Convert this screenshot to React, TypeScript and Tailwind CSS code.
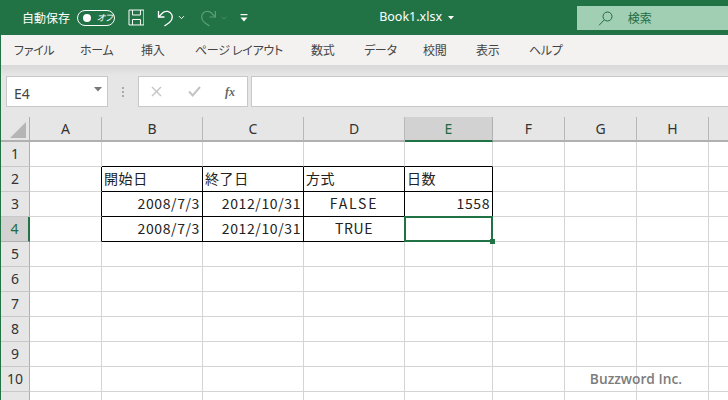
import React from 'react';
import { ChevronDown } from 'lucide-react';

const jp = "font-['Noto_Sans_CJK_JP','Noto_Sans',sans-serif] [font-feature-settings:'palt']";

const tabs = [
  { label: 'ファイル', w: 'w-[66px]' },
  { label: 'ホーム', w: 'w-[61px]' },
  { label: '挿入', w: 'w-[54px]' },
  { label: 'ページ レイアウト', w: 'w-[116px]' },
  { label: '数式', w: 'w-[53px]' },
  { label: 'データ', w: 'w-[59px]' },
  { label: '校閲', w: 'w-[53px]' },
  { label: '表示', w: 'w-[53px]' },
  { label: 'ヘルプ', w: 'w-[40px]' },
];

const columns = ['A', 'B', 'C', 'D', 'E', 'F', 'G', 'H', ''];

const rows = [1, 2, 3, 4, 5, 6, 7, 8, 9, 10, 11];

type CellData = { text: string; align: 'left' | 'right' | 'center'; wide?: boolean };

const cells: Record<string, CellData> = {
  B2: { text: '開始日', align: 'left' },
  C2: { text: '終了日', align: 'left' },
  D2: { text: '方式', align: 'left' },
  E2: { text: '日数', align: 'left' },
  B3: { text: '2008/7/3', align: 'right' },
  C3: { text: '2012/10/31', align: 'right' },
  D3: { text: 'FALSE', align: 'center', wide: true },
  E3: { text: '1558', align: 'right' },
  B4: { text: '2008/7/3', align: 'right' },
  C4: { text: '2012/10/31', align: 'right' },
  D4: { text: 'TRUE', align: 'center' },
  E4: { text: '', align: 'left' },
};

const Cell: React.FC<{ col: string; row: number }> = ({ col, row }) => {
  const data = cells[col + row];
  const isHead = col !== '' && 'BCDE'.includes(col);
  const inTable = isHead && row >= 2 && row <= 4;
  const rightBlack = inTable || (col === 'A' && row >= 2 && row <= 4);
  const bottomBlack = inTable || (isHead && row === 1);
  const selected = col === 'E' && row === 4;
  return (
    <div
      className={`relative flex items-center border-r border-b px-[2px] pb-[2px] text-[14px] text-[#222] ${jp} ${
        data?.wide ? 'tracking-[1.8px]' : 'tracking-[0.6px]'
      } ${rightBlack ? 'border-r-black' : 'border-r-[#d4d4d4]'} ${bottomBlack ? 'border-b-black' : 'border-b-[#d4d4d4]'} ${
        data?.align === 'right' ? 'justify-end' : data?.align === 'center' ? 'justify-center' : 'justify-start'
      } ${selected ? 'z-10' : ''}`}
    >
      {data?.text}
      {selected && (
        <div className="absolute left-[-1px] top-[-1px] right-[-1px] bottom-[-1px] border-2 border-[#217346]">
          <div className="absolute right-[-4px] bottom-[-4px] h-[5px] w-[5px] bg-[#217346]" />
        </div>
      )}
    </div>
  );
};

export default function App() {
  return (
    <div className={`relative flex h-[400px] w-[728px] flex-col overflow-hidden bg-white ${jp}`}>
      {/* Title bar */}
      <div className="flex h-[35px] shrink-0 items-center bg-[#217346] text-white">
        <span className="ml-[22px] w-[55px] text-[12px]">自動保存</span>
        <div className="flex h-[16px] w-[38px] items-center rounded-full border border-white pl-[5px]">
          <div className="h-[8px] w-[8px] rounded-full bg-white" />
          <span className="ml-[6px] text-[9px] italic">オフ</span>
        </div>
        <svg className="ml-[13px]" width="17" height="17" viewBox="0 0 17 17" fill="none" stroke="white" strokeWidth="1">
          <path d="M1 1H16V16H1Z" />
          <path d="M4.5 1V6H12.5V1" />
          <path d="M4.5 16V10.5H12.5V16" />
        </svg>
        <svg className="ml-[13px]" width="17" height="18" viewBox="0 0 17 18" fill="none" stroke="white" strokeWidth="1.3">
          <path d="M1.5 2V8H7.5" />
          <path d="M1.5 8L6 3.5C9 1.5 13 2 14.8 5.5C16 8.5 14.8 11.5 12.5 13.5L7.5 17" />
        </svg>
        <ChevronDown className="ml-[3px]" size={9} strokeWidth={2.5} color="white" />
        <svg className="ml-[14px]" width="17" height="18" viewBox="0 0 17 18" fill="none" stroke="#5d9c7b" strokeWidth="1.2">
          <path d="M15.5 2V8H9.5" />
          <path d="M15.5 8L11 3.5C8 1.5 4 2 2.2 5.5C1 8.5 2.2 11.5 4.5 13.5L9.5 17" />
        </svg>
        <ChevronDown className="ml-[3px]" size={8} strokeWidth={2} color="#5d9c7b" />
        <svg className="ml-[12px]" width="8" height="8" viewBox="0 0 8 8" fill="white">
          <rect x="0.5" y="0" width="7" height="1.2" />
          <path d="M0.5 3.5H7.5L4 7.5Z" />
        </svg>
        <span className="ml-[131px] w-[68px] font-['Noto_Sans',sans-serif] text-[12.5px]">Book1.xlsx</span>
        <svg className="ml-[1px]" width="6" height="4" viewBox="0 0 6 4" fill="white">
          <path d="M0 0H6L3 3.5Z" />
        </svg>
        <div className="ml-[123px] mt-[1px] flex h-[24px] w-[152px] items-center bg-[#a0cfb4] text-[#1f6b43]">
          <svg className="ml-[21px]" width="15" height="15" viewBox="0 0 15 15" fill="none" stroke="#1f6b43" strokeWidth="1">
            <circle cx="9.5" cy="5.5" r="4.5" />
            <path d="M6.2 9L1 14.3" />
          </svg>
          <span className="ml-[15px] text-[12px]">検索</span>
        </div>
      </div>

      <div className="flex flex-1 flex-col border-l border-l-[#217346]">
        {/* Ribbon tabs */}
        <div className="flex h-[30px] shrink-0 items-center bg-[#f3f2f1] pl-[13px] text-[12px] tracking-[-0.3px] text-[#444]">
          {tabs.map(tab => (
            <span key={tab.label} className={`${tab.w} whitespace-nowrap`}>
              {tab.label}
            </span>
          ))}
        </div>

        {/* Formula bar */}
        <div className="flex h-[52px] shrink-0 flex-col bg-[#e6e6e6] bg-gradient-to-b from-[#d8d8d8] to-[#e6e6e6] to-[10px]">
          <div className="ml-[5px] mt-[11px] flex h-[31px] items-stretch">
            <div className="flex w-[102px] items-center justify-between border border-[#c8c8c8] bg-white pl-[7px] pr-[4px] pt-[3px] font-['Noto_Sans',sans-serif] text-[14px] text-[#444]">
              E4
              <svg className="mb-[7px] mr-[1px]" width="8" height="5" viewBox="0 0 8 5" fill="#777">
                <path d="M0 0H8L4 4.5Z" />
              </svg>
            </div>
            <div className="flex w-[30px] flex-col items-center justify-center gap-[2px]">
              <div className="h-[2px] w-[2px] bg-[#aaa]" />
              <div className="h-[2px] w-[2px] bg-[#aaa]" />
              <div className="h-[2px] w-[2px] bg-[#aaa]" />
            </div>
            <div className="flex w-[110px] items-center border border-[#c8c8c8] bg-white">
              <svg className="ml-[12px]" width="11" height="11" viewBox="0 0 11 11" stroke="#c4c4c4" strokeWidth="1.4">
                <path d="M1 1L10 10M10 1L1 10" />
              </svg>
              <svg className="ml-[26px]" width="13" height="11" viewBox="0 0 13 11" fill="none" stroke="#c4c4c4" strokeWidth="2">
                <path d="M1 5.5L4.7 9.5L12 1" />
              </svg>
              <span className="ml-[24px] font-['Liberation_Serif',serif] text-[12px] font-bold italic text-[#666]">fx</span>
            </div>
            <div className="ml-[3px] flex-1 border-y border-l border-[#c8c8c8] bg-white" />
          </div>
        </div>

        {/* Sheet */}
        <div className="relative flex-1">
          <div className="grid grid-cols-[29px_72px_101px_101px_101px_88px_72px_72px_72px_20px] grid-rows-[25px_repeat(11,25px)]">
            <div className="relative border-r border-b-2 border-[#b0b0b0] bg-[#e6e6e6]">
              <div className="absolute bottom-[2px] right-[3px] h-0 w-0 border-b-[16px] border-l-[16px] border-b-[#b5b5b5] border-l-transparent" />
            </div>
            {columns.map((name, i) => (
              <div
                key={i}
                className={`flex items-center justify-center border-r border-b-2 font-['Noto_Sans',sans-serif] text-[14px] ${
                  name === 'E'
                    ? 'border-r-[#b0b0b0] border-b-[#217346] bg-[#d2d2d2] text-[#1f6b43]'
                    : 'border-r-[#b8b8b8] border-b-[#b0b0b0] bg-[#e6e6e6] text-[#333]'
                }`}
              >
                {name}
              </div>
            ))}
            {rows.map(r => (
              <React.Fragment key={r}>
                <div
                  className={`flex items-center justify-center border-b pb-[2px] font-['Noto_Sans',sans-serif] text-[14px] ${
                    r === 4
                      ? 'border-r-2 border-r-[#217346] border-b-[#b0b0b0] bg-[#d2d2d2] text-[#1f6b43]'
                      : 'border-r border-r-[#b0b0b0] border-b-[#c8c8c8] bg-[#e6e6e6] text-[#333]'
                  }`}
                >
                  {r <= 10 ? r : ''}
                </div>
                {columns.map((name, i) => (
                  <Cell key={i} col={name} row={r} />
                ))}
              </React.Fragment>
            ))}
          </div>
        </div>
      </div>

      {/* Watermark */}
      <span className="absolute bottom-[10px] right-[46px] z-20 font-['Open_Sans',sans-serif] text-[13.75px] font-semibold text-[#7c7c7c]">
        Buzzword Inc.
      </span>
    </div>
  );
}
